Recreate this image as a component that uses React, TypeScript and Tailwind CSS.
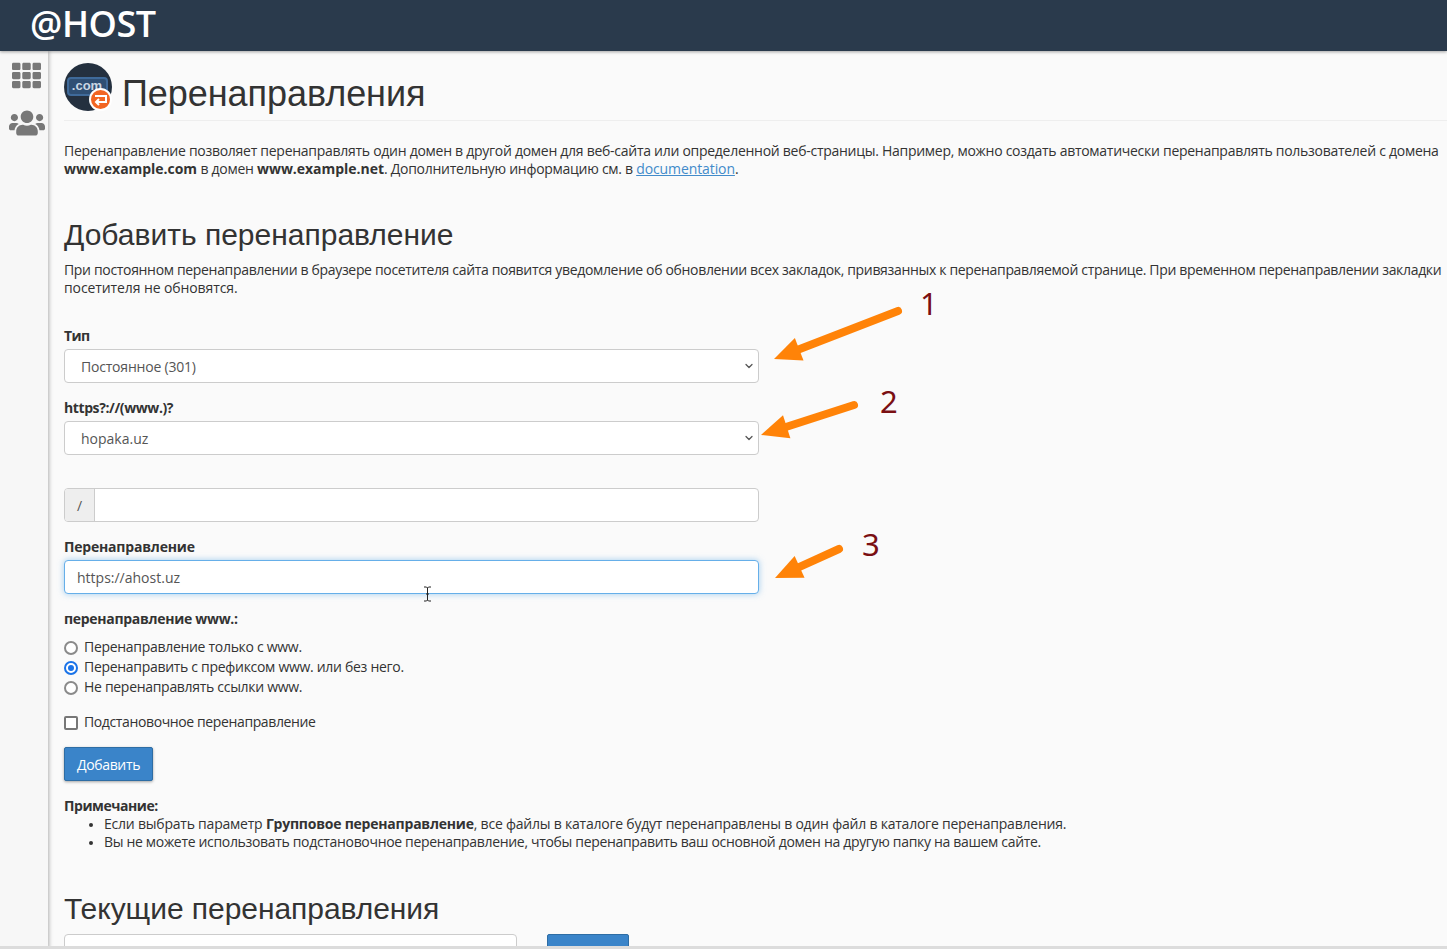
import { ChevronDown } from "lucide-react";
import { FaUsers, FaTh } from "react-icons/fa";

const heading = "font-['Liberation_Sans',Arial,sans-serif] text-[#333] font-normal";

const Arrow = ({ className, x1, y1, x2, y2, w, h }: { className: string; x1: number; y1: number; x2: number; y2: number; w: number; h: number }) => {
  const dx = x2 - x1;
  const dy = y2 - y1;
  const len = Math.hypot(dx, dy);
  const ux = dx / len;
  const uy = dy / len;
  const bx = x2 - ux * 27;
  const by = y2 - uy * 27;
  const points = `${x2},${y2} ${bx - uy * 12},${by + ux * 12} ${bx + uy * 12},${by - ux * 12}`;
  return (
    <svg className={className} width={w} height={h} viewBox={`0 0 ${w} ${h}`}>
      <line x1={x1} y1={y1} x2={bx} y2={by} stroke="#ff8308" strokeWidth="8" strokeLinecap="round" />
      <polygon points={points} fill="#ff8308" />
    </svg>
  );
};

const Field = ({ label, children, className, labelClass }: { label?: string; children: React.ReactNode; className?: string; labelClass?: string }) => (
  <div className={className}>
    {label && <div className={`mb-[3px] text-sm font-bold leading-5 text-[#333] ${labelClass ?? "tracking-[-0.2px]"}`}>{label}</div>}
    {children}
  </div>
);

const SelectBox = ({ value, valueClass }: { value: string; valueClass?: string }) => (
  <div className="flex h-[34px] items-center justify-between rounded border border-[#ccc] bg-white pl-4 pr-[3px] text-sm text-[#555]">
    <span className={`pt-[2px] ${valueClass ?? ""}`}>{value}</span>
    <ChevronDown size={12} strokeWidth={2.5} className="text-[#555]" />
  </div>
);

const RadioRow = ({ label, checked }: { label: string; checked?: boolean }) => (
  <label className="flex h-5 items-center gap-[6px] text-sm tracking-[-0.3px] text-[#333]">
    <span className={`mt-[2px] flex size-[14px] items-center justify-center rounded-full border-2 bg-white ${checked ? "border-[#1a73e8]" : "border-[#8a8a8a]"}`}>
      {checked && <span className="size-[6px] rounded-full bg-[#1a73e8]" />}
    </span>
    {label}
  </label>
);

export default function App() {
  return (
    <div className="relative flex h-[949px] w-[1447px] flex-col overflow-hidden bg-[#fafafa] font-['Open_Sans',sans-serif] text-sm text-[#333]">
      <header className="z-10 flex h-[51px] shrink-0 items-center bg-[#2a3a4c] pb-1 pl-[30px] shadow-[0_1px_3px_rgba(0,0,0,0.35)]">
        <span className="text-[36px] font-semibold leading-none tracking-[-0.4px] text-white">@HOST</span>
      </header>

      <div className="flex min-h-0 flex-1">
        <aside className="flex w-[48px] shrink-0 flex-col items-center bg-[#f7f7f7] pl-[5px] pt-[10px] shadow-[1px_0_4px_rgba(0,0,0,0.3)]">
          <FaTh size={29} className="text-[#787878]" />
          <FaUsers size={36} className="mt-[15px] text-[#787878]" />
        </aside>

        <main className="min-w-0 flex-1 pl-4">
          <div className="flex h-[70px] items-start gap-[10px] border-b border-[#eee] pt-3">
            <div className="relative size-12 shrink-0 rounded-full bg-[#24303f]">
              <div className="absolute left-[3px] top-[14px] flex h-[19px] w-[41px] items-center justify-center rounded-[4px] border-2 border-[#3f6a9a] bg-[#2f4f74] pr-[1px] font-['Liberation_Sans',sans-serif] text-[13px] font-bold text-[#c9d6e3]">
                .com
              </div>
              <div className="absolute left-[25px] top-[25px] flex size-[23px] items-center justify-center rounded-full border-2 border-white bg-[#f26522]">
                <svg width="15" height="12" viewBox="0 0 15 12" fill="none" stroke="#fff" strokeWidth="2">
                  <path d="M2 2h11v6H3" />
                  <path d="M6 5 3 8l3 3" />
                </svg>
              </div>
            </div>
            <h1 className={`${heading} mt-2 text-[36px] leading-[46px] tracking-[-0.05px]`}>Перенаправления</h1>
          </div>

          <p className="mt-[21px] whitespace-nowrap text-sm leading-[18px] tracking-[-0.275px]">
            Перенаправление позволяет перенаправлять один домен в другой домен для веб-сайта или определенной веб-страницы. Например, можно создать автоматически перенаправлять пользователей с домена
            <br />
            <span className="tracking-[-0.28px]">
              <b className="tracking-[-0.03px]">www.example.com</b> в домен <b className="tracking-[-0.03px]">www.example.net</b>. Дополнительную информацию см. в{" "}
              <a className="tracking-[-0.1px] text-[#428bca] underline">documentation</a>.
            </span>
          </p>

          <h2 className={`${heading} mt-[37px] text-[30px] leading-[40px]`}>Добавить перенаправление</h2>
          <p className="mt-[6px] whitespace-nowrap text-sm leading-[18px] tracking-[-0.33px]">
            При постоянном перенаправлении в браузере посетителя сайта появится уведомление об обновлении всех закладок, привязанных к перенаправляемой странице. При временном перенаправлении закладки
            <br />
            <span className="tracking-[-0.1px]">посетителя не обновятся.</span>
          </p>

          <div className="w-[695px]">
            <Field label="Тип" className="mt-[29px]" labelClass="tracking-[-0.6px]">
              <SelectBox value="Постоянное (301)" valueClass="tracking-[-0.2px]" />
            </Field>
            <Field label="https?://(www.)?" className="mt-[15px]" labelClass="tracking-[-0.4px]">
              <SelectBox value="hopaka.uz" />
            </Field>
            <div className="mt-[33px] flex h-[34px] overflow-hidden rounded border border-[#ccc] bg-white">
              <span className="flex w-[30px] items-center justify-center border-r border-[#ccc] bg-[#eee] pt-[2px] text-[#555]">/</span>
            </div>
            <Field label="Перенаправление" className="mt-[15px]">
              <div className="flex h-[34px] items-center rounded border border-[#66afe9] bg-white pl-3 pt-[2px] text-[#555] shadow-[0_0_6px_rgba(102,175,233,0.6)]">
                https://ahost.uz
              </div>
            </Field>
          </div>

          <div className="mt-[15px] font-bold leading-5 tracking-[-0.3px]">перенаправление www.:</div>
          <div className="mt-[8px]">
            <RadioRow label="Перенаправление только с www." />
            <RadioRow label="Перенаправить с префиксом www. или без него." checked />
            <RadioRow label="Не перенаправлять ссылки www." />
          </div>
          <label className="mt-[15px] flex h-5 items-center gap-[6px] tracking-[-0.38px]">
            <span className="mt-[2px] size-[14px] rounded-[2px] border-2 border-[#777] bg-white" />
            Подстановочное перенаправление
          </label>
          <button className="mt-[15px] flex h-[34px] w-[89px] items-center justify-center rounded-[2px] border border-[#2e6da4] bg-[#3a84c9] pt-[2px] tracking-[-0.35px] text-white shadow-[0_1px_3px_rgba(0,0,0,0.35)]">
            Добавить
          </button>

          <div className="mt-[16px] font-bold leading-[18px] tracking-[-0.45px]">Примечание:</div>
          <ul className="list-disc pl-10 leading-[18px] marker:text-[12px]">
            <li className="tracking-[-0.22px]">Если выбрать параметр <b>Групповое перенаправление</b>, все файлы в каталоге будут перенаправлены в один файл в каталоге перенаправления.</li>
            <li className="tracking-[-0.325px]">Вы не можете использовать подстановочное перенаправление, чтобы перенаправить ваш основной домен на другую папку на вашем сайте.</li>
          </ul>

          <h2 className={`${heading} mt-[38px] text-[30px] leading-[40px] tracking-[-0.05px]`}>Текущие перенаправления</h2>
          <div className="mt-[5px] flex gap-[30px]">
            <div className="h-[34px] w-[453px] rounded border border-[#ccc] bg-white" />
            <div className="h-[34px] w-[82px] rounded-[2px] border border-[#2e6da4] bg-[#3a84c9]" />
          </div>
        </main>
      </div>

      {/* аннотации поверх скриншота */}
      <Arrow className="absolute left-[770px] top-[300px]" w={140} h={70} x1={128} y1={11} x2={4} y2={59} />
      <Arrow className="absolute left-[755px] top-[395px]" w={110} h={50} x1={99} y1={10} x2={6} y2={40} />
      <Arrow className="absolute left-[770px] top-[540px]" w={80} h={45} x1={69} y1={9} x2={5} y2={38} />
      <span className="absolute left-[920px] top-[283px] font-['Noto_Sans',sans-serif] text-[31px] leading-10 text-[#7a0f12]">1</span>
      <span className="absolute left-[880px] top-[381px] font-['Noto_Sans',sans-serif] text-[31px] leading-10 text-[#7a0f12]">2</span>
      <span className="absolute left-[862px] top-[524px] font-['Noto_Sans',sans-serif] text-[31px] leading-10 text-[#7a0f12]">3</span>

      {/* I-beam курсор */}
      <svg className="absolute left-[423px] top-[586px]" width="9" height="16" viewBox="0 0 9 16" fill="none" stroke="#222" strokeWidth="1">
        <path d="M1 1h2.500l1 1 1-1H8M4.500 2v12M1 15h2.500l1-1 1 1H8M3 8h3" />
      </svg>

      <div className="absolute bottom-0 left-0 h-[3px] w-full bg-[#dcdcdc]" />
    </div>
  );
}
